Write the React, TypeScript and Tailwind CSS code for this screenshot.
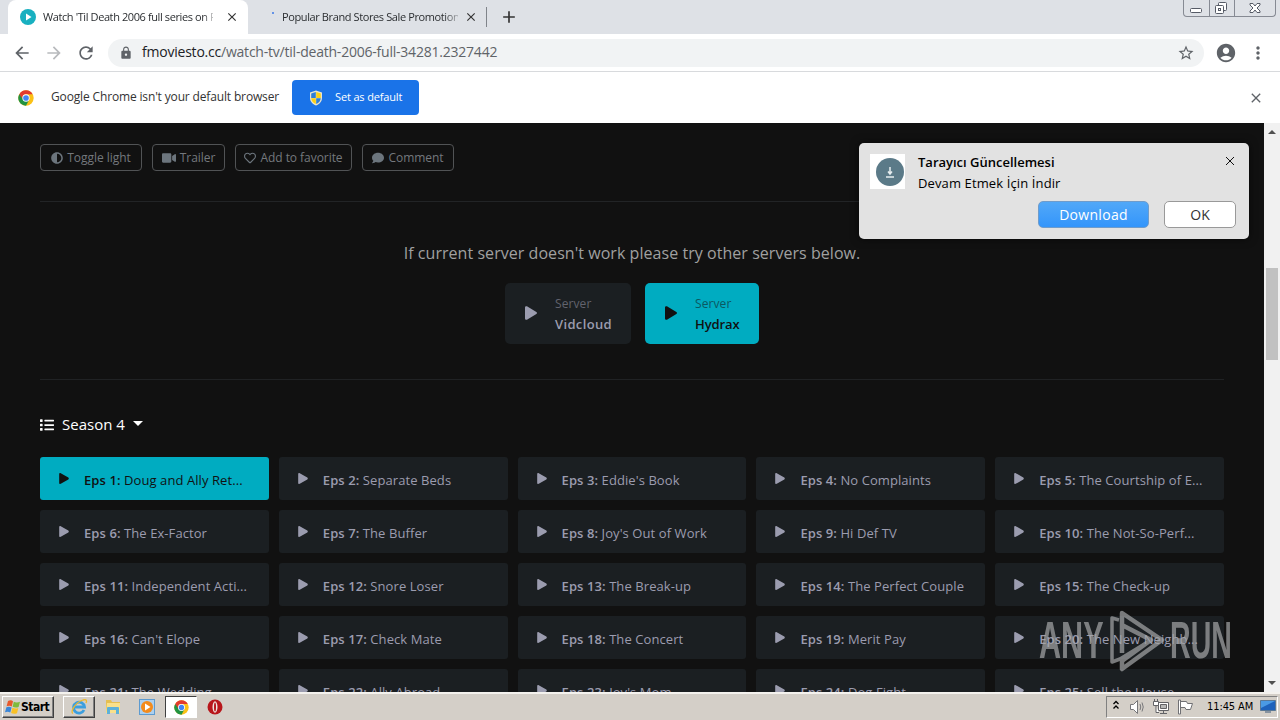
import { FaAdjust, FaVideo, FaRegHeart, FaComment, FaPlay, FaList } from 'react-icons/fa';
import {
    MdArrowBack,
    MdArrowForward,
    MdRefresh,
    MdLock,
    MdStarBorder,
    MdAccountCircle,
    MdMoreVert,
    MdClose,
    MdAdd,
} from 'react-icons/md';

const episodes = [
    "Doug and Ally Ret...", "Separate Beds", "Eddie's Book", "No Complaints", "The Courtship of E...",
    "The Ex-Factor", "The Buffer", "Joy's Out of Work", "Hi Def TV", "The Not-So-Perf...",
    "Independent Acti...", "Snore Loser", "The Break-up", "The Perfect Couple", "The Check-up",
    "Can't Elope", "Check Mate", "The Concert", "Merit Pay", "The New Neighb...",
    "The Wedding", "Ally Abroad", "Joy's Mom", "Dog Fight", "Sell the House",
];

const actions = [
    { icon: FaAdjust, label: 'Toggle light', width: 'w-[102px]' },
    { icon: FaVideo, label: 'Trailer', width: 'w-[73px]' },
    { icon: FaRegHeart, label: 'Add to favorite', width: 'w-[117px]' },
    { icon: FaComment, label: 'Comment', width: 'w-[92px]' },
];

function ChromeLogo({ className }: { className: string }) {
    return (
        <svg viewBox="0 0 48 48" className={className}>
            <circle cx="24" cy="24" r="23" fill="#fbc116" />
            <path d="M4 12.500A23 23 0 0 0 24 47l9.500-17.500L24 24z" fill="#229342" />
            <path d="M4 12.500A23 23 0 0 1 44 12.500H24a11 11 0 0 0-10 6.500L13 26z" fill="#e33b2e" />
            <circle cx="24" cy="24" r="11" fill="#fff" />
            <circle cx="24" cy="24" r="8.500" fill="#4285f4" />
        </svg>
    );
}

function Shield() {
    return (
        <svg viewBox="0 0 16 16" className="h-4 w-4">
            <path d="M8 .5 14 2.500V8c0 3.500-2.500 6-6 7.500C4.500 14 2 11.500 2 8V2.500z" fill="#e8e4d0" />
            <path d="M7.800 2v6H3.200V3.500z" fill="#2f7fd6" />
            <path d="M8.200 2v6h4.600V3.500z" fill="#fcd116" />
            <path d="M3.200 8.300h4.600V14C5 12.800 3.500 11 3.200 8.300z" fill="#fcd116" />
            <path d="M12.800 8.300H8.200V14c2.800-1.200 4.300-3 4.600-5.700z" fill="#2f7fd6" />
        </svg>
    );
}

function WindowButtons() {
    return (
        <div className="flex h-[17px] w-[93px] rounded-b-[4px] border border-t-0 border-[#868a93]">
            <svg viewBox="0 0 93 17" className="h-[17px] w-[93px] shrink-0" fill="none" stroke="#565b66">
                <path d="M25.500 0v16M50.500 0v16" stroke="#868a93" />
                <rect x="6.500" y="8.500" width="11" height="4" rx="1" fill="#fff" />
                <rect x="34.500" y="2.500" width="8" height="8" rx="1" fill="#fff" />
                <rect x="31.500" y="5.500" width="8" height="8" rx="1" fill="#fff" />
                <rect x="34.500" y="8.500" width="2" height="2" />
                <path d="M66 3.500h3l2 2.500 2-2.500h3v1.500L73 8l3 3v1.500h-3L71 10l-2 2.500h-3V11l3-3-3-3z" fill="#fff" />
            </svg>
        </div>
    );
}

function TabStrip() {
    return (
        <div className="flex h-[34px] bg-[#dee1e6] text-[11px] text-[#2b2e31]">
            <div className="ml-2 flex w-[240px] items-center rounded-t-lg bg-white pl-3">
                <svg viewBox="0 0 16 16" className="h-4 w-4 shrink-0">
                    <circle cx="8" cy="8" r="8" fill="#18b0c0" />
                    <path d="M6 4.500v7L11.500 8z" fill="#fff" />
                </svg>
                <div className="ml-[7px] w-[170px] whitespace-nowrap tracking-[-0.4px] [mask-image:linear-gradient(to_right,#000_94%,#0004)]">
                    Watch 'Til Death 2006 full series on F
                </div>
                <MdClose className="ml-3 h-[14px] w-[14px] stroke-[#333] text-[#333]" />
            </div>
            <div className="my-[7px] flex w-[239px] items-center border-r border-[#80848a]">
                <span className="mb-2 ml-6 h-[2px] w-[2px] rounded-full bg-[#3b78e7]" />
                <div className="ml-2 w-[176px] whitespace-nowrap tracking-[-0.39px] [mask-image:linear-gradient(to_right,#000_92%,#0004)]">
                    Popular Brand Stores Sale Promotion
                </div>
                <MdClose className="ml-[6px] h-[14px] w-[14px] shrink-0 stroke-[#333] text-[#333]" />
            </div>
            <MdAdd className="ml-3 mt-[7px] h-5 w-5 text-[#333]" />
            <div className="ml-auto mr-1">
                <WindowButtons />
            </div>
        </div>
    );
}

function Toolbar() {
    return (
        <div className="flex h-[38px] items-center border-b border-[#d8dadd] bg-white text-[#5f6368]">
            <MdArrowBack className="ml-3 h-5 w-5" />
            <MdArrowForward className="ml-3 h-5 w-5 text-[#b8babd]" />
            <MdRefresh className="ml-3 h-5 w-5" />
            <div className="ml-3 flex h-7 w-[1096px] items-center rounded-full bg-[#f1f3f4] pl-[11px] pr-[9px]">
                <MdLock className="h-[14px] w-[14px]" />
                <div className="ml-[9px] mb-[2px] whitespace-nowrap text-[14px] tracking-[-0.22px]">
                    <span className="text-[#202124]">fmoviesto.cc</span>/watch-tv/til-death-2006-full-34281.2327442
                </div>
                <MdStarBorder className="ml-auto h-[18px] w-[18px]" />
            </div>
            <MdAccountCircle className="ml-[11px] h-[22px] w-[22px]" />
            <MdMoreVert className="ml-[11px] h-5 w-5" />
        </div>
    );
}

function InfoBar() {
    return (
        <div className="flex h-[51px] items-center bg-white pl-[18px]">
            <ChromeLogo className="h-4 w-4" />
            <span className="mb-[2px] ml-[17px] w-[241px] whitespace-nowrap text-[12px] tracking-[-0.15px] text-[#333]">
                Google Chrome isn't your default browser
            </span>
            <div className="flex h-[35px] w-[127px] items-center rounded-[4px] bg-[#1a73e8] pl-4 text-[11px] text-white">
                <Shield />
                <span className="ml-[11px] whitespace-nowrap tracking-[-0.15px]">Set as default</span>
            </div>
            <MdClose className="ml-auto mr-4 h-4 w-4 stroke-[#5f6368] text-[#5f6368]" />
        </div>
    );
}

function Server({ name, active }: { name: string; active?: boolean }) {
    return (
        <div
            className={`flex h-[61px] items-center rounded-[5px] pl-5 ${active ? 'w-[114px] bg-[#00acc1] text-[#111]' : 'w-[126px] bg-[#1b1f22] text-[#9b9caf]'
                }`}
        >
            <FaPlay className="mb-[1px] h-[14px] w-[12px]" />
            <div className="ml-[18px] leading-[21px]">
                <div className={`text-[12px] tracking-[0.1px] ${active ? 'text-[#0b5862]' : 'text-[#62636d]'}`}>Server</div>
                <div className={`text-[13px] font-semibold ${active ? 'tracking-[-0.1px]' : 'tracking-[0.35px]'}`}>{name}</div>
            </div>
        </div>
    );
}

function Notification() {
    return (
        <div className="absolute left-[859px] top-5 h-24 w-[390px] rounded-[5px] bg-[#e2e2e2] text-black shadow-[0_0_8px_rgba(0,0,0,0.6)]">
            <div className="flex pl-[11px] pt-[9px]">
                <div className="mt-[2px] flex h-[35px] w-[35px] items-center bg-white pl-[6px]">
                    <svg viewBox="0 0 28 28" className="h-7 w-7">
                        <circle cx="14" cy="14" r="14" fill="#5b7a88" />
                        <path d="M14 9v7M12 13.500 14 16l2-2.500M10 19h8" fill="none" stroke="#e8eef0" strokeWidth="1.500" />
                    </svg>
                </div>
                <div className="ml-[13px] text-[13px] leading-[21px]">
                    <div className="font-semibold">Tarayıcı Güncellemesi</div>
                    <div className="tracking-[0.12px]">Devam Etmek İçin İndir</div>
                </div>
                <svg viewBox="0 0 10 10" className="ml-auto mr-[14px] mt-1 h-[10px] w-[10px]">
                    <path d="M1 1l8 8M9 1 1 9" stroke="#111" />
                </svg>
            </div>
            <div className="mt-[7px] flex justify-end gap-[15px] pr-[13px] text-[14px]">
                <div className="flex h-[27px] w-[111px] items-center justify-center rounded-[5px] border border-[#6f9ccb] bg-linear-to-b from-[#51a8f8] to-[#3395fb] tracking-[0.3px] text-white">
                    Download
                </div>
                <div className="flex h-[27px] w-[72px] items-center justify-center rounded-[5px] border border-[#999] bg-white text-[#333]">
                    OK
                </div>
            </div>
        </div>
    );
}

function Watermark() {
    return (
        <div className="absolute left-[1039px] top-[484px] flex h-[64px] w-[192px] items-center text-[51px] font-bold leading-none text-[#a5a7a8] opacity-70">
            <div className="w-[66px]">
                <span className="inline-block origin-left scale-x-[0.6] font-['Liberation_Sans']">ANY</span>
            </div>
            <svg viewBox="0 0 64 64" className="mt-1 h-16 w-[64px] shrink-0" fill="none" stroke="currentColor" strokeWidth="4.500" strokeLinejoin="round">
                <path d="M17 44V4l40 27-40 29v-8l29-21-29-15" />
                <path d="M14 11 7 9v44l8-3L46 31" strokeWidth="3.500" />
            </svg>
            <div className="ml-[1px] w-[60px]">
                <span className="inline-block origin-left scale-x-[0.56] font-['Liberation_Sans']">RUN</span>
            </div>
        </div>
    );
}

function Page() {
    return (
        <div className="relative flex h-[569px] overflow-hidden bg-[#111] text-[#9b9caf]">
            <div className="w-[1264px] px-10 pt-[21px]">
                <div className="flex gap-[10px]">
                    {actions.map(({ icon: Icon, label, width }) => (
                        <div
                            key={label}
                            className={`flex h-[27px] items-center justify-center gap-1 whitespace-nowrap rounded-[4px] border border-[#515355] text-[12px] tracking-[-0.05px] text-[#74787d] ${width}`}
                        >
                            {label === 'Trailer' ? (
                                <Icon className="h-[14px] w-[14px] text-[#6c757d]" />
                            ) : (
                                <Icon className="h-3 w-3 text-[#6c757d]" />
                            )}
                            {label}
                        </div>
                    ))}
                </div>
                <div className="mt-[30px] border-t border-[#222426]" />
                <p className="mt-[39px] text-center text-[16px] leading-6 tracking-[0.05px] text-[#a0a0a0]">
                    If current server doesn't work please try other servers below.
                </p>
                <div className="mt-[18px] flex justify-center gap-[14px]">
                    <Server name="Vidcloud" />
                    <Server name="Hydrax" active />
                </div>
                <div className="mt-[35px] border-t border-[#202224]" />
                <div className="mt-[34px] flex h-[22px] items-center text-[15px] text-white">
                    <FaList className="h-[14px] w-[14px]" />
                    <span className="mb-[2px] ml-2 w-[63px] whitespace-nowrap">Season 4</span>
                    <span className="mb-[3px] ml-2 border-x-[5px] border-t-[5px] border-x-transparent border-t-white" />
                </div>
                <div className="mt-[21px] grid grid-cols-5 gap-[10px]">
                    {episodes.map((title, idx) => (
                        <div
                            key={title}
                            className={`flex h-[43px] items-center whitespace-nowrap rounded-[3px] pl-[19px] pt-[4px] text-[13px] tracking-[0.08px] ${idx === 0 ? 'bg-[#00acc1] text-[#111]' : 'bg-[#1b1f22] text-[#9b9caf]'
                                }`}
                        >
                            <FaPlay className="mb-[4px] h-[11px] w-[10px]" />
                            <span className="ml-[15px]">
                                <span className="font-semibold">Eps {idx + 1}:</span> {title}
                            </span>
                        </div>
                    ))}
                </div>
            </div>
            <div className="flex w-4 flex-col items-center bg-[#f1f1f1]">
                <span className="mt-[7px] border-x-4 border-b-4 border-x-transparent border-b-[#505050]" />
                <span className="mt-[134px] h-[92px] w-3 bg-[#c1c1c1]" />
                <span className="mb-[7px] mt-auto border-x-4 border-t-4 border-x-transparent border-t-[#505050]" />
            </div>
            <Notification />
            <Watermark />
        </div>
    );
}

function Taskbar() {
    const raised = 'border border-t-white border-l-white border-r-[#404040] border-b-[#404040] shadow-[inset_-1px_-1px_0_#808080]';
    return (
        <div className="flex h-7 items-center border-t-2 border-[#f4f2ee] bg-[#d4cfc8] font-['DejaVu_Sans_Condensed','DejaVu_Sans',sans-serif] text-[11px] text-black">
            <div className={`ml-[2px] flex h-[22px] w-[52px] items-center pl-[2px] ${raised}`}>
                <svg viewBox="0 0 16 16" className="h-4 w-4 shrink-0">
                    <path d="M3 2q3-1.500 5 .2L6.800 7.400Q4.500 6 1.600 7.200z" fill="#e8592b" />
                    <path d="M8.800 2.700Q11.500 4.300 15 2.800L13.600 8Q10.500 9.300 7.600 7.800z" fill="#7fba3c" />
                    <path d="M1.400 8.200Q4 7 6.600 8.400L5.300 13.500Q2.800 12 0 13.300z" fill="#3a86d8" />
                    <path d="M7.400 8.800Q10.500 10.300 13.300 9L12 14.200Q8.700 15.500 6.100 14z" fill="#f9c126" />
                </svg>
                <span className="text-[12px] font-bold tracking-[-0.5px]">Start</span>
            </div>
            <div className={`ml-[9px] flex h-[22px] w-8 items-center justify-center ${raised}`}>
                <svg viewBox="0 0 18 18" className="h-[18px] w-[18px]" fill="none">
                    <path d="M14 12A5.500 5.500 0 1 1 14.500 9H5" stroke="#3c9fdf" strokeWidth="2.800" />
                    <path d="M3 15.500C-.5 14 6 4 13 2c4-1 4 1 3 3" stroke="#edb92e" strokeWidth="1.300" />
                </svg>
            </div>
            <svg viewBox="0 0 16 16" className="ml-[10px] h-4 w-4">
                <path d="M1 1h5l1 2h8v11H1z" fill="#e5bf52" />
                <path d="M2 4h13v10H1z" fill="#f9e08a" />
                <path d="M2 9q0-1 1-1h10q1 0 1 1v6h-3v-4H5v4H2z" fill="#5db1d9" />
            </svg>
            <svg viewBox="0 0 16 16" className="ml-[18px] h-4 w-4">
                <rect x=".5" y=".5" width="15" height="15" fill="#acd0ef" stroke="#5d9bd0" />
                <circle cx="8" cy="8" r="6" fill="#f38b1c" />
                <path d="M6 4.500v7L11.500 8z" fill="#fff" />
            </svg>
            <div className="ml-[10px] flex h-[22px] w-8 items-center justify-center border border-b-white border-l-[#404040] border-r-white border-t-[#404040] bg-white">
                <ChromeLogo className="h-[15px] w-[15px]" />
            </div>
            <svg viewBox="0 0 16 16" className="ml-[10px] h-4 w-4">
                <circle cx="8" cy="8" r="7.500" fill="#b8161b" />
                <ellipse cx="8" cy="8" rx="2.500" ry="5.700" fill="#efe4df" />
                <ellipse cx="8" cy="8" rx="1" ry="4.500" fill="#b8161b" />
            </svg>
            <div className="ml-auto mr-[2px] flex h-[22px] w-[172px] items-center border border-b-white border-l-[#808080] border-r-white border-t-[#808080]">
                <svg viewBox="0 0 8 10" className="mb-1 ml-[5px] h-[10px] w-2" fill="none" stroke="#000" strokeWidth="1.300">
                    <path d="M1.500 4 4 1.500 6.500 4M1.500 8.500 4 6l2.500 2.500" />
                </svg>
                <svg viewBox="0 0 18 16" className="ml-[9px] h-4 w-[18px]" fill="none" stroke="#77777a">
                    <path d="M1.500 5.500h3l4-4v13l-4-4h-3z" fill="#fff" />
                    <path d="M11 5q1.500 3 0 6M13 3.500q2.500 4.500 0 9" />
                </svg>
                <svg viewBox="0 0 16 16" className="ml-[6px] h-4 w-4" fill="#fff" stroke="#626266">
                    <path d="M5.500 3.500h10v8h-10zM7 14.500h7M10.500 12v2" />
                    <path d="M7.500 5.500h6v4h-6z" fill="#b8b8b8" />
                    <path d="M.5 2.500h5v4h-5zM1.500 0v2.500M4.500 0v2.500M3 7v6.500h3" />
                </svg>
                <svg viewBox="0 0 16 16" className="ml-2 h-4 w-4" fill="#fff" stroke="#707074">
                    <path d="M1.500 1h2v14h-2zM3.500 2.500h6l1 2h5l-2 6H9l-1-2H3.500z" />
                </svg>
                <span className="ml-[14px] w-[49px] whitespace-nowrap text-[11px] tracking-[-0.1px]">11:45 AM</span>
                <svg viewBox="0 0 16 14" className="ml-[4px] h-[14px] w-4 shrink-0">
                    <path d="M.5.5h15v10H.5z" fill="#1f62bb" stroke="#5b7895" />
                    <path d="M1 1h14L1 8z" fill="#4b9ae4" />
                    <path d="M5 11h6v2H5z" fill="#8793a0" />
                </svg>
            </div>
        </div>
    );
}

export default function App() {
    return (
        <div className="h-[720px] w-[1280px] overflow-hidden font-['Open_Sans','Noto_Sans',sans-serif]">
            <TabStrip />
            <Toolbar />
            <InfoBar />
            <Page />
            <Taskbar />
        </div>
    );
}
